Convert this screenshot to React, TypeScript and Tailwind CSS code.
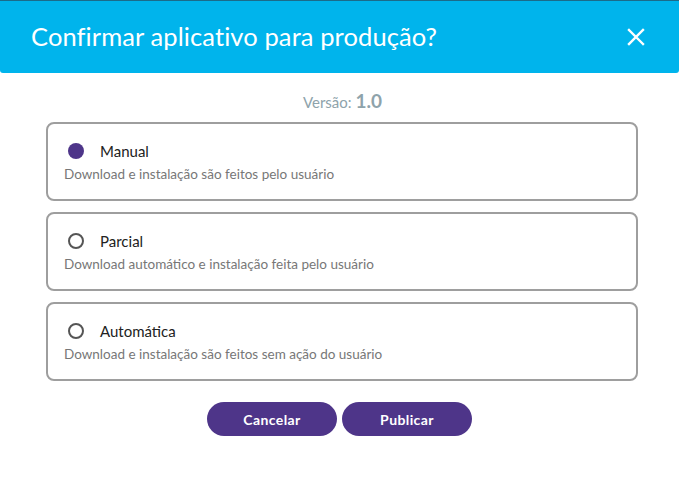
import { useState } from "react";

const options = [
  { id: "manual", label: "Manual", desc: "Download e instalação são feitos pelo usuário" },
  { id: "parcial", label: "Parcial", desc: "Download automático e instalação feita pelo usuário" },
  { id: "auto", label: "Automática", desc: "Download e instalação são feitos sem ação do usuário" },
];

export default function App() {
  const [selected, setSelected] = useState("manual");

  return (
    <div className="w-[679px] h-[501px] bg-white font-['Lato','Open_Sans',sans-serif] overflow-hidden">
      {/* Header */}
      <div className="h-[73px] bg-[#00b4ec] border-t border-[#1b6b8a] rounded-b-[3px] flex items-center justify-between pl-[31px] pr-[34px]">
        <h1 className="text-white text-[25.5px] font-normal tracking-[0.1px] pb-[2px]">
          Confirmar aplicativo para produção?
        </h1>
        <button className="text-white">
          <svg width="18" height="18" viewBox="0 0 18 18" fill="none" stroke="currentColor" strokeWidth="2.4" strokeLinecap="square">
            <path d="M2 2 L16 16 M16 2 L2 16" />
          </svg>
        </button>
      </div>

      {/* Body */}
      <div className="pl-[46px] pr-[41px] pt-[17px]">
        <p className="text-center text-[#8ea3ab] text-[15px] leading-[22px] pl-[1px]">
          Versão: <span className="font-bold text-[19px]">1.0</span>
        </p>

        <div className="mt-[9px] flex flex-col gap-[11px]">
          {options.map((o) => (
            <label
              key={o.id}
              onClick={() => setSelected(o.id)}
              className="h-[79px] border-2 border-[#9e9e9e] rounded-[8px] pl-[16px] pt-[17px] cursor-pointer block"
            >
              <div className="flex items-center pl-[4px]">
                {selected === o.id ? (
                  <span className="w-[16px] h-[16px] rounded-full bg-[#4e3589]" />
                ) : (
                  <span className="w-[16px] h-[16px] rounded-full border-2 border-[#555]" />
                )}
                <span className="ml-[16px] text-[15px] text-[#222] leading-[20px]">{o.label}</span>
              </div>
              <div className="mt-[3px] text-[13.5px] text-[#777] leading-[20px]">{o.desc}</div>
            </label>
          ))}
        </div>

        <div className="mt-[21px] flex justify-center gap-[5px] pr-[5px]">
          <button className="w-[130px] h-[34px] rounded-full bg-[#4e3589] text-white text-[14px] font-bold tracking-[0.4px]">
            Cancelar
          </button>
          <button className="w-[130px] h-[34px] rounded-full bg-[#4e3589] text-white text-[14px] font-bold tracking-[0.4px]">
            Publicar
          </button>
        </div>
      </div>
    </div>
  );
}
